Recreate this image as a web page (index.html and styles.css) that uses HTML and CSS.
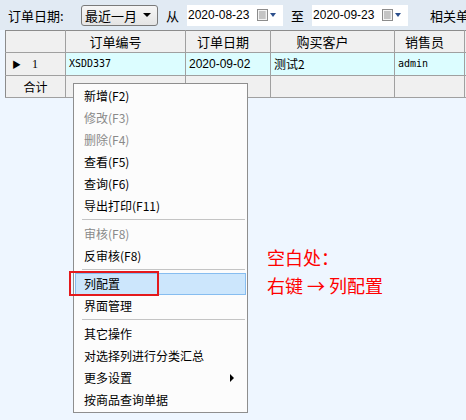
FILE: index.html
```html
<!DOCTYPE html>
<html>

<head>
    <title>销售订单</title>
    <link rel="stylesheet" href="styles.css">
</head>

<body>
    <div class="filter-bar">
        <span class="filter-label">订单日期:</span>
        <div class="period-select">
            <span>最近一月</span>
            <span class="select-arrow"></span>
        </div>
        <span class="range-word">从</span>
        <div class="date-box">
            <span class="date-text">2020-08-23</span>
            <svg class="cal-icon" width="20" height="12" viewBox="0 0 20 12">
                <rect x="0.5" y="0.5" width="10" height="11" fill="#f4f4f4" stroke="#8c8c8c"/>
                <path d="M2 3h7M2 5h7M2 7h7M2 9h7M3 2v8M5 2v8M7 2v8" stroke="#b4b4b4" stroke-width="1"/>
                <path d="M13 4h6l-3 4z" fill="#2c4f8c"/>
            </svg>
        </div>
        <span class="range-word">至</span>
        <div class="date-box">
            <span class="date-text">2020-09-23</span>
            <svg class="cal-icon" width="20" height="12" viewBox="0 0 20 12">
                <rect x="0.5" y="0.5" width="10" height="11" fill="#f4f4f4" stroke="#8c8c8c"/>
                <path d="M2 3h7M2 5h7M2 7h7M2 9h7M3 2v8M5 2v8M7 2v8" stroke="#b4b4b4" stroke-width="1"/>
                <path d="M13 4h6l-3 4z" fill="#2c4f8c"/>
            </svg>
        </div>
        <span class="filter-label more-label">相关单号</span>
    </div>

    <div class="grid-wrap">
        <table class="order-grid">
            <colgroup>
                <col class="col-ind">
                <col class="col-no">
                <col class="col-date">
                <col class="col-cust">
                <col class="col-sales">
                <col class="col-extra">
            </colgroup>
            <tr class="grid-head">
                <td></td>
                <td class="pad-wide">订单编号</td>
                <td class="pad-narrow">订单日期</td>
                <td class="pad-wide">购买客户</td>
                <td class="pad-narrow">销售员</td>
                <td></td>
            </tr>
            <tr class="grid-row">
                <td class="ind-cell"><span class="row-mark">&#9654;</span><span class="row-num">1</span></td>
                <td class="mono">XSDD337</td>
                <td class="num">2020-09-02</td>
                <td>测试2</td>
                <td class="mono">admin</td>
                <td></td>
            </tr>
            <tr class="grid-total">
                <td class="total-label">合计</td>
                <td></td>
                <td></td>
                <td></td>
                <td></td>
                <td></td>
            </tr>
        </table>
    </div>

    <!-- right-click menu on the grid -->
    <div class="context-menu">
        <div class="menu-item">新增(F2)</div>
        <div class="menu-item disabled">修改(F3)</div>
        <div class="menu-item disabled">删除(F4)</div>
        <div class="menu-item">查看(F5)</div>
        <div class="menu-item">查询(F6)</div>
        <div class="menu-item">导出打印(F11)</div>
        <div class="menu-sep"></div>
        <div class="menu-item disabled">审核(F8)</div>
        <div class="menu-item">反审核(F8)</div>
        <div class="menu-sep"></div>
        <div class="menu-item active">列配置<span class="mark-box"></span></div>
        <div class="menu-item">界面管理</div>
        <div class="menu-sep"></div>
        <div class="menu-item">其它操作</div>
        <div class="menu-item">对选择列进行分类汇总</div>
        <div class="menu-item has-sub">更多设置<span class="sub-arrow"></span></div>
        <div class="menu-item">按商品查询单据</div>
    </div>

    <div class="note">
        <div>空白处：</div>
        <div>右键 → 列配置</div>
    </div>
</body>

</html>
```

FILE: styles.css
```css
body {
    margin: 0;
    width: 466px;
    height: 420px;
    overflow: hidden;
    background-color: #eef6ff;
    font-family: "Noto Sans CJK SC", "Liberation Sans", sans-serif;
    font-size: 12px;
    color: #000;
}

.filter-bar {
    height: 30px;
    display: flex;
    align-items: center;
    background-color: #e1eaf3;
    white-space: nowrap;
    overflow: hidden;
}

.filter-bar > * {
    flex-shrink: 0;
}

.filter-label {
    font-size: 13px;
    margin-left: 8px;
    width: 73px;
}

.more-label {
    margin-left: 22px;
}

.period-select {
    width: 77px;
    height: 21px;
    border: 1px solid #7a7a7a;
    border-radius: 3px;
    background: linear-gradient(#f6f6f6, #e4e4e4);
    display: flex;
    align-items: center;
    justify-content: space-between;
    padding: 0 4px 0 3px;
    box-sizing: border-box;
    font-size: 13px;
}

.select-arrow {
    width: 0;
    height: 0;
    border-left: 4px solid transparent;
    border-right: 4px solid transparent;
    border-top: 4px solid #000;
    margin-right: 2px;
}

.range-word {
    font-size: 13px;
    margin: 0 8px;
}

.date-box {
    width: 96px;
    height: 21px;
    background-color: #fff;
    display: flex;
    align-items: center;
    justify-content: space-between;
    padding: 0 6px 0 1px;
    box-sizing: border-box;
}

.date-text {
    font-family: "Liberation Sans", sans-serif;
    font-size: 12px;
}

.cal-icon {
    display: block;
}

.grid-wrap {
    margin-left: 5px;
    width: 461px;
    overflow: hidden;
}

.order-grid {
    border-collapse: collapse;
    table-layout: fixed;
    width: 539px;
}

.col-ind { width: 60px; }
.col-no { width: 120px; }
.col-date { width: 85px; }
.col-cust { width: 124px; }
.col-sales { width: 70px; }
.col-extra { width: 80px; }

.order-grid td {
    height: 21px;
    border: 1px solid #a0a0a0;
    padding: 0 0 0 3px;
    white-space: nowrap;
    overflow: hidden;
    line-height: 20px;
}

.order-grid tr:first-child td {
    border-top-color: #8c8c8c;
}

.order-grid td:first-child {
    border-left-color: #8c8c8c;
}

.grid-head td {
    background-color: #f0f0f0;
    text-align: center;
    padding: 0;
    font-size: 13px;
}

.grid-head .pad-wide {
    padding-right: 20px;
}

.grid-head .pad-narrow {
    padding-right: 10px;
}

.grid-row td {
    background-color: #dcfdff;
}

.grid-row td.ind-cell {
    background-color: #f0f0f0;
    padding-left: 6px;
}

.row-mark {
    font-size: 9px;
    display: inline-block;
    width: 20px;
}

.row-num {
    font-family: "Liberation Serif", serif;
    font-size: 12px;
}

.mono {
    font-family: "DejaVu Sans Mono", monospace;
    font-size: 10px;
}

.num {
    font-family: "Liberation Sans", sans-serif;
}

.grid-total td {
    background-color: #f0f0f0;
}

.grid-total .total-label {
    text-align: center;
    padding: 0;
}

.context-menu {
    position: absolute;
    left: 73px;
    top: 83px;
    width: 175px;
    box-sizing: border-box;
    border: 1px solid #8e8e8e;
    background-color: #fcfcfc;
    padding: 1px 0;
}

.menu-item {
    position: relative;
    height: 22px;
    line-height: 22px;
    margin: 0 1px;
    padding-left: 9px;
    box-sizing: border-box;
    font-size: 12px;
}

.menu-item.disabled {
    color: #8a8a8a;
}

.menu-item.active {
    background-color: #cce6fc;
    border: 1px solid #86bdf0;
    line-height: 20px;
    padding-left: 8px;
}

.mark-box {
    position: absolute;
    left: -7px;
    top: -3px;
    width: 86px;
    height: 21px;
    border: 2px solid #e4191c;
}

.menu-sep {
    height: 6px;
    margin: 0 2px 0 8px;
    background: linear-gradient(transparent 2px, #c4c4c4 2px, #c4c4c4 3px, transparent 3px);
}

.sub-arrow {
    position: absolute;
    right: 12px;
    top: 7px;
    width: 0;
    height: 0;
    border-top: 4px solid transparent;
    border-bottom: 4px solid transparent;
    border-left: 4px solid #000;
}

.note {
    position: absolute;
    left: 267px;
    top: 243px;
    color: #ff0000;
    font-size: 18px;
    line-height: 28px;
}
```
